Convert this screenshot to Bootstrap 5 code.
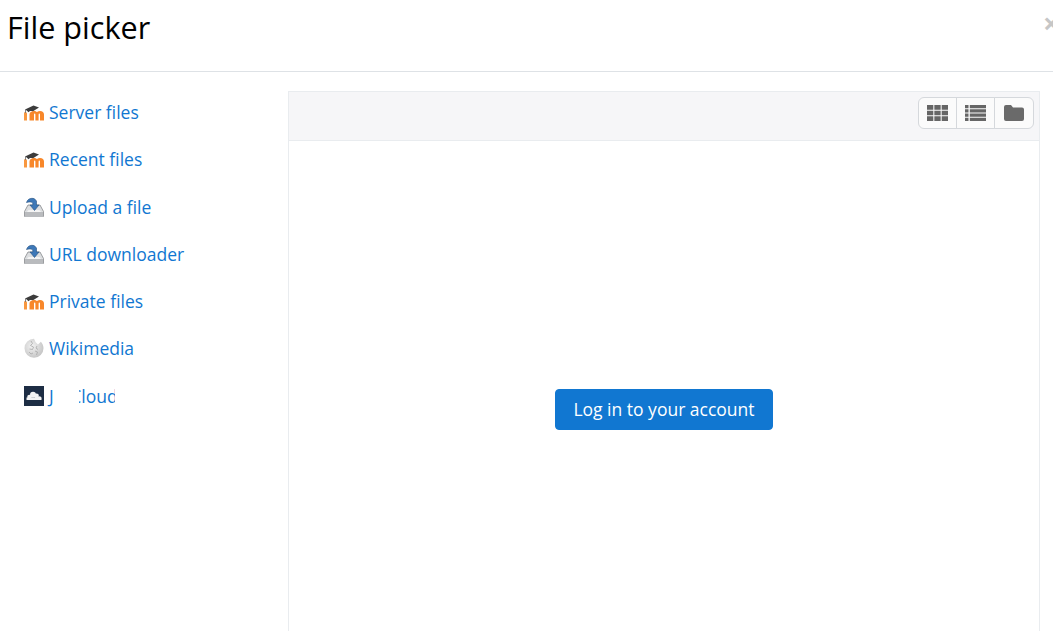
<!DOCTYPE html>
<html lang="en">
<head>
<meta charset="utf-8">
<title>File picker</title>
<link href="https://cdn.jsdelivr.net/npm/bootstrap@5.3.0/dist/css/bootstrap.min.css" rel="stylesheet">
<style>
html,body{height:631px;overflow:hidden;background:#fff}
body{font-family:"Open Sans","Liberation Sans",sans-serif;color:#1d2125}
.fp-head{height:72px;border-bottom:1px solid #dee2e6;padding:7px 0 0 7px;position:relative;overflow:hidden}
.fp-title{font-size:30.6px;line-height:41px;margin:0;color:#000;font-weight:400}
.fp-close{position:absolute;left:1043px;top:6px;font-size:29px;line-height:34px;font-weight:700;color:#c6c6c6;background:none;border:0;padding:0}
.fp-body{height:559px;overflow:hidden}
.fp-side{width:288px;flex:none;padding:16.6px 0 0 24px}
.fp-link{display:flex;align-items:center;height:47.25px;color:#1177d1;text-decoration:none;font-size:17.5px;white-space:nowrap}
.fp-link svg{flex:none;width:20px;height:20px;margin-right:5px}
.fp-main{width:752px;flex:none;margin-top:19px;border-left:1px solid #e9ecef;border-right:1px solid #e9ecef}
.fp-bar{height:50px;background:#f6f6f8;border:solid #e9ecef;border-width:1px 0;padding:5px 5px 0 0}
.fp-views .btn{width:39px;height:32px;padding:0;background:#fbfbfb;border-color:#d5d8dc;display:flex;align-items:center;justify-content:center}
.fp-views .btn:last-child{width:40px}
.fp-views svg{display:block}
.fp-content{height:537px}
.fp-login{background:#1177d1;border-color:#1177d1;color:#fff;font-size:17.5px;line-height:27px;padding:6px 17px;border-radius:4px}
.fp-jc{display:inline-flex;align-items:center}
.fp-clip{display:inline-block;width:36.5px;overflow:hidden;white-space:nowrap;margin-left:25px}
.fp-clip span{display:inline-block;margin-left:-8.500px}
</style>
</head>
<body>
<header class="fp-head">
  <h1 class="fp-title">File picker</h1>
  <button class="fp-close" type="button" aria-label="Close">×</button>
</header>
<div class="fp-body d-flex">
  <nav class="fp-side">
    <a class="fp-link" href="#"><svg viewBox="0 0 20 20"><use href="#i-moodle"/></svg>Server files</a>
    <a class="fp-link" href="#"><svg viewBox="0 0 20 20"><use href="#i-moodle"/></svg>Recent files</a>
    <a class="fp-link" href="#"><svg viewBox="0 0 20 20"><use href="#i-upload"/></svg>Upload a file</a>
    <a class="fp-link" href="#"><svg viewBox="0 0 20 20"><use href="#i-upload"/></svg>URL downloader</a>
    <a class="fp-link" href="#"><svg viewBox="0 0 20 20"><use href="#i-moodle"/></svg>Private files</a>
    <a class="fp-link" href="#"><svg viewBox="0 0 20 20"><use href="#i-wiki"/></svg>Wikimedia</a>
    <a class="fp-link" href="#"><svg viewBox="0 0 20 20"><rect width="20" height="20" fill="#1d2d44"/><g fill="#f4f4f4"><circle cx="5.500" cy="11" r="2.300"/><circle cx="9" cy="8.700" r="3"/><circle cx="12.500" cy="10" r="2.400"/><circle cx="15.500" cy="12" r="1.800"/><path d="M2.500 11.500h15V14h-15z"/></g></svg><span class="fp-jc">J<span class="fp-clip"><span>Cloud</span></span></span></a>
  </nav>
  <main class="fp-main">
    <div class="fp-bar d-flex justify-content-end">
      <div class="btn-group fp-views" role="group">
        <button class="btn" type="button" aria-label="Icons"><svg width="21" height="16" viewBox="0 0 21 16" fill="#666"><path d="M0 0h6.300v4.700H0zM7.350 0h6.300v4.700h-6.300zM14.700 0H21v4.700h-6.300zM0 5.650h6.300v4.700H0zM7.350 5.650h6.300v4.700h-6.300zM14.700 5.650H21v4.700h-6.300zM0 11.300h6.300V16H0zM7.350 11.300h6.300V16h-6.300zM14.700 11.300H21V16h-6.300z"/></svg></button>
        <button class="btn" type="button" aria-label="List"><svg width="21" height="16" viewBox="0 0 21 16" fill="#666"><path d="M0 0h3.500v3.200H0zM4.800 0H21v3.200H4.800zM0 4.270h3.500v3.200H0zM4.800 4.270H21v3.200H4.800zM0 8.530h3.500v3.200H0zM4.800 8.530H21v3.200H4.800zM0 12.800h3.500V16H0zM4.800 12.800H21V16H4.800z"/></svg></button>
        <button class="btn" type="button" aria-label="Folders"><svg width="20" height="16" viewBox="0 0 20 16" fill="#6a6a6a"><path d="M2 0h5l2 2.500h9a2 2 0 0 1 2 2V14a2 2 0 0 1-2 2H2a2 2 0 0 1-2-2V2a2 2 0 0 1 2-2z"/></svg></button>
      </div>
    </div>
    <div class="fp-content d-flex align-items-center justify-content-center">
      <button class="btn fp-login" type="button">Log in to your account</button>
    </div>
  </main>
</div>
<svg width="0" height="0" class="position-absolute">
  <defs>
    <symbol id="i-moodle" viewBox="0 0 20 20">
      <path d="M0 10.500c1.500-.4 3-.2 3 1V18.500H0z" fill="#f8973f"/>
      <path d="M5.500 18.500v-6C5.500 10.500 7.500 9 10 9c1.300 0 2.200.4 3 1.100.8-.7 1.900-1.100 3-1.100 2.500 0 4 1.500 4 3.500v6h-4v-5.800c0-.8-.2-1.200-.7-1.200s-.7.400-.7 1.200v5.800h-3.200v-5.800c0-.8-.2-1.200-.7-1.200s-.7.400-.7 1.200v5.800z" fill="#f8872a"/>
      <path d="M1 7.500L9.500 3.500 15 5.500 9 9.300C7 8.500 5.500 9 4.500 10.200 3.500 9 2.500 8.300 1 7.500z" fill="#3c3c3c"/>
      <path d="M1.500 7.500v3.500" stroke="#666" stroke-width=".8" fill="none"/>
    </symbol>
    <symbol id="i-upload" viewBox="0 0 20 20">
      <path d="M4 8h12l3.500 6.500V19a1 1 0 0 1-1 1H1.500a1 1 0 0 1-1-1v-4.500z" fill="#dcdee0" stroke="#85888b" stroke-width=".8"/>
      <path d="M1 15h18v4.500H1z" fill="#b9bbbe"/>
      <path d="M4.500 13h11l1.500 2H3z" fill="#f4f4f4"/>
      <path d="M2.500 5.500C3.500 2 7 .5 10.500 1.800L12.500 4v4H15l-4.500 5.500L6 8h2.800V6C7.500 4.800 5 4.600 2.500 5.500z" fill="#3d78b8" stroke="#27507f" stroke-width=".6"/>
    </symbol>
    <symbol id="i-wiki" viewBox="0 0 20 20">
      <defs><radialGradient id="wg" cx=".4" cy=".4" r=".75"><stop offset="0" stop-color="#f2f2f2"/><stop offset="1" stop-color="#bdbdbd"/></radialGradient></defs>
      <path d="M10 .8a9.500 9.500 0 1 0 9.500 9.500c0-2.500-1-4.800-2.600-6.500L14 6.500 11.500 4z" fill="url(#wg)"/>
      <path d="M7 3l1.500 2.500-2 2 3 1.500-1 2.500-3-.5M13 8l-1 2 2 1.500M5 14l2 2 2-1M11 13l2.500 1-1 3" fill="none" stroke="#a8a8a8" stroke-width=".8"/>
    </symbol>
  </defs>
</svg>
</body>
</html>
